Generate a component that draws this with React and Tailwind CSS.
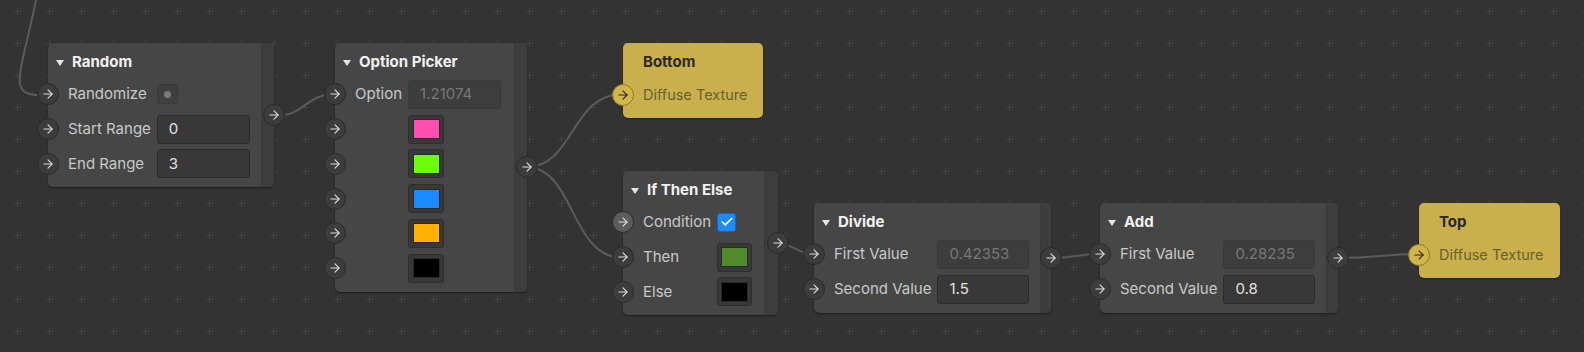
import { ArrowRight, Check } from 'lucide-react'

// node-graph canvas: a handful of nodes wired together, on a dotted (plus) grid

const Port = ({ side = 'in', variant = 'dark', hot = false }) => {
  const pos = side === 'in' ? 'left-[-11px]' : 'right-[-11px]'
  const skin =
    variant === 'gold'
      ? 'bg-[#d1b64c] border-[#8e7a30] text-[#2d2a20]'
      : hot
        ? 'bg-[#5c5c5c] border-[#2c2c2c] text-[#dcdcdc]'
        : 'bg-[#3c3c3c] border-[#2a2a2a] text-[#dcdcdc]'
  return (
    <div className={`absolute ${pos} top-1/2 -translate-y-1/2 z-10 flex h-[22px] w-[22px] items-center justify-center rounded-full border-[1.5px] ${skin}`}>
      <ArrowRight size={14} strokeWidth={1.9} />
    </div>
  )
}

const Field = ({ value, muted = false }) => (
  <div
    className={`flex h-[29px] w-full items-center rounded-[3px] border pl-[11px] text-[15px] ${
      muted ? 'border-[#3a3a3a] bg-[#3d3d3d] text-[#777777]' : 'border-[#2b2b2b] bg-[#383838] text-[#e2e2e2]'
    }`}
  >
    {value}
  </div>
)

const Swatch = ({ color }) => (
  <div className="flex h-[29px] w-[36px] items-center justify-center rounded-[3px] border border-[#2e2e2e] bg-[#383838]">
    <div className="h-[20px] w-[27px] border border-[#2a2a2a]" style={{ background: color }} />
  </div>
)

const Row = ({ label, cols, hot, children }) => (
  <div className={`relative grid h-[34.75px] items-center gap-[6px] pl-[20px] ${cols}`}>
    <Port hot={hot} />
    <span className="whitespace-nowrap text-[15px] text-[#c9c9c9]">{label}</span>
    <div className="flex items-center">{children}</div>
  </div>
)

const Node = ({ pos, title, children }) => (
  <div className={`absolute flex rounded-[5px] bg-[#464646] shadow-[0_1px_2px_rgba(0,0,0,0.45)] ${pos}`}>
    <div className="flex-1 pb-[6px]">
      <div className="flex h-[34px] items-center gap-[8px] pl-[8px] pt-[5px]">
        <svg width="8" height="6" viewBox="0 0 8 6">
          <polygon points="0,0 8,0 4,6" fill="#e6e6e6" />
        </svg>
        <span className="text-[15px] font-bold text-[#f2f2f2]">{title}</span>
      </div>
      {children}
    </div>
    <div className="w-[14px] rounded-r-[5px] border-l border-[#3a3a3a] bg-[#3d3d3d]" />
    <Port side="out" />
  </div>
)

const Output = ({ pos, title }) => (
  <div className={`absolute rounded-[5px] bg-[#c9b04c] pb-[6px] shadow-[0_1px_2px_rgba(0,0,0,0.4)] ${pos}`}>
    <div className="flex h-[34px] items-center pl-[20px] pt-[5px]">
      <span className="text-[15px] font-bold text-[#2b2820]">{title}</span>
    </div>
    <div className="relative flex h-[35px] items-center pl-[20px]">
      <Port variant="gold" />
      <span className="text-[14.5px] text-[#6d5f2c]">Diffuse Texture</span>
    </div>
  </div>
)

const Edges = () => (
  <svg className="absolute inset-0" width="1584" height="352" fill="none" stroke="#5b5b5b" strokeWidth="2">
    <path d="M36 0 C28 40 18 70 20 84 Q22 95 38 95" />
    <path d="M275 116 C305 116 305 94 336 94" />
    <path d="M526 167 C575 167 570 94 623 94" />
    <path d="M526 167 C575 167 570 258 623 258" />
    <path d="M778 244 C796 244 796 254 814 254" />
    <path d="M1051 258 C1076 258 1076 254 1101 254" />
    <path d="M1338 258 C1380 258 1380 254 1420 254" />
  </svg>
)

export default function App() {
  return (
    <div className="relative h-[352px] w-[1584px] overflow-hidden bg-[#333333] font-['Inter',sans-serif]">
      <svg className="absolute inset-0" width="1584" height="352">
        <defs>
          <pattern id="plus" x="1" y="-5" width="32" height="32" patternUnits="userSpaceOnUse">
            <path d="M13 16.5h7M16.5 13v7" stroke="#434343" strokeWidth="1" />
          </pattern>
        </defs>
        <rect width="1584" height="352" fill="url(#plus)" />
      </svg>
      <Edges />

      <Node pos="left-[48px] top-[43px] w-[226px]" title="Random">
        <Row label="Randomize" cols="grid-cols-[1fr_93px] pr-[11px]">
          <div className="flex h-[20px] w-[21px] items-center justify-center rounded-[3px] border border-[#3a3a3a] bg-[#3f3f3f]">
            <div className="h-[7px] w-[7px] rounded-full bg-[#7a7a7a]" />
          </div>
        </Row>
        <Row label="Start Range" cols="grid-cols-[1fr_93px] pr-[11px]">
          <Field value="0" />
        </Row>
        <Row label="End Range" cols="grid-cols-[1fr_93px] pr-[11px]">
          <Field value="3" />
        </Row>
      </Node>

      <Node pos="left-[335px] top-[43px] w-[192px]" title="Option Picker">
        <Row label="Option" cols="grid-cols-[1fr_93px] pr-[13px]">
          <Field value="1.21074" muted />
        </Row>
        {['#ff4fb0', '#6dff0a', '#1a8cff', '#ffb000', '#000000'].map((c) => (
          <Row key={c} label="" cols="grid-cols-[1fr_93px] pr-[13px]">
            <Swatch color={c} />
          </Row>
        ))}
      </Node>

      <Output pos="left-[623px] top-[43px] w-[140px]" title="Bottom" />

      <Node pos="left-[623px] top-[171px] w-[155px]" title="If Then Else">
        <Row label="Condition" hot cols="grid-cols-[1fr_35px] pr-[12px]">
          <div className="flex h-[19px] w-[19px] items-center justify-center rounded-[3px] border border-[#1565b8] bg-[#1a8cff] text-white">
            <Check size={14} strokeWidth={3} />
          </div>
        </Row>
        <Row label="Then" cols="grid-cols-[1fr_35px] pr-[12px]">
          <Swatch color="#4f8a2b" />
        </Row>
        <Row label="Else" cols="grid-cols-[1fr_35px] pr-[12px]">
          <Swatch color="#000000" />
        </Row>
      </Node>

      <Node pos="left-[814px] top-[203px] w-[237px]" title="Divide">
        <Row label="First Value" cols="grid-cols-[1fr_92px] pr-[11px]">
          <Field value="0.42353" muted />
        </Row>
        <Row label="Second Value" cols="grid-cols-[1fr_92px] pr-[11px]">
          <Field value="1.5" />
        </Row>
      </Node>

      <Node pos="left-[1100px] top-[203px] w-[238px]" title="Add">
        <Row label="First Value" cols="grid-cols-[1fr_92px] pr-[11px]">
          <Field value="0.28235" muted />
        </Row>
        <Row label="Second Value" cols="grid-cols-[1fr_92px] pr-[11px]">
          <Field value="0.8" />
        </Row>
      </Node>

      <Output pos="left-[1419px] top-[203px] w-[141px]" title="Top" />
    </div>
  )
}
